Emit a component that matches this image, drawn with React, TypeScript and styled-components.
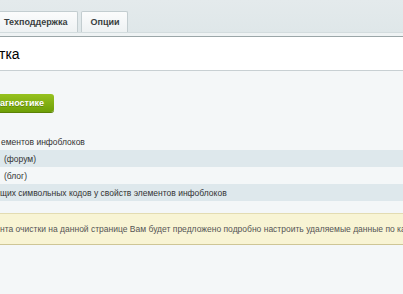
import styled, { createGlobalStyle } from "styled-components";

const GlobalStyle = createGlobalStyle`
    html, body {
        margin: 0;
        padding: 0;
        background: #f4f7f8;
        overflow: hidden;
    }
    body {
        font-family: "Liberation Sans", Arial, sans-serif;
        color: #333;
    }
`;

const rows = [
    { text: "ементов инфоблоков", indent: 1, shaded: false },
    { text: "(форум)", indent: 4, shaded: true },
    { text: "(блог)", indent: 4, shaded: false },
    {
        text: "щих символьных кодов у свойств элементов инфоблоков",
        indent: 0,
        shaded: true,
    },
];

export default function App() {
    return (
        <>
            <GlobalStyle />
            <Page>
                <TabBar>
                    <Tab clipped>Техподдержка</Tab>
                    <Tab>Опции</Tab>
                </TabBar>
                <TabEdge />
                <Header>
                    <Title>тка</Title>
                </Header>
                <Content>
                    <ButtonRow>
                        <GreenButton>агностике</GreenButton>
                    </ButtonRow>
                    <List>
                        {rows.map((row) => (
                            <Row key={row.text} shaded={row.shaded}>
                                <RowText style={{ paddingLeft: row.indent }}>
                                    {row.text}
                                </RowText>
                            </Row>
                        ))}
                    </List>
                    <Notice>
                        нта очистки на данной странице Вам будет предложено
                        подробно настроить удаляемые данные по каж
                    </Notice>
                </Content>
            </Page>
        </>
    );
}

const Page = styled.div`
    width: 403px;
    height: 294px;
    overflow: hidden;
    background: #f4f7f8;
`;

const TabBar = styled.div`
    height: 20px;
    padding-top: 12px;
    display: flex;
    align-items: flex-end;
    gap: 3px;
    background: linear-gradient(to bottom, #e4eaec, #dfe7e9);
    border-bottom: 1px solid #d3dcde;
`;

const Tab = styled.div<{ clipped?: boolean }>`
    height: 20px;
    display: flex;
    align-items: center;
    padding: ${({ clipped }) => (clipped ? "0 10px 0 4px" : "0 7px 0 8px")};
    font-size: 9px;
    font-weight: bold;
    color: #3a3f41;
    background: linear-gradient(to bottom, #fbfcfc, #eef2f3);
    border: 1px solid #c3cdd0;
    border-bottom: none;
    border-left: ${({ clipped }) => (clipped ? "none" : "1px solid #c3cdd0")};
    border-radius: ${({ clipped }) => (clipped ? "0 2px 0 0" : "2px 2px 0 0")};
`;

const TabEdge = styled.div`
    height: 3px;
    background: #eff3f4;
    border-bottom: 1px solid #9ba6a8;
`;

const Header = styled.div`
    height: 32px;
    background: #fff;
    border-bottom: 1px solid #c8d0d3;
    display: flex;
    align-items: center;
    padding-top: 1px;
`;

const Title = styled.div`
    font-size: 14px;
    color: #000;
    margin-left: -1px;
`;

const Content = styled.div`
    padding-top: 23px;
`;

const ButtonRow = styled.div`
    display: flex;
`;

const GreenButton = styled.div`
    height: 18px;
    display: flex;
    align-items: center;
    padding: 0 10px 0 0;
    font-size: 9px;
    font-weight: bold;
    color: #fff;
    background: linear-gradient(to bottom, #97c21f, #6e9f07);
    border-radius: 0 3px 3px 0;
    box-shadow: 0 1px 0 #5b8205;
    text-shadow: 0 1px 0 rgba(0, 0, 0, 0.25);
`;

const List = styled.div`
    margin-top: 21px;
    display: flex;
    flex-direction: column;
`;

const Row = styled.div<{ shaded: boolean }>`
    height: 17px;
    display: flex;
    align-items: center;
    background: ${({ shaded }) => (shaded ? "#dee8ec" : "#f4f7f8")};
`;

const RowText = styled.span`
    font-size: 8.5px;
    color: #333;
    white-space: nowrap;
`;

const Notice = styled.div`
    margin-top: 12px;
    height: 30px;
    display: flex;
    align-items: center;
    white-space: nowrap;
    overflow: hidden;
    font-size: 8.5px;
    color: #555;
    background: #f8f4d4;
    border-top: 1px solid #e3dcb2;
    border-bottom: 1px solid #cec696;
`;
